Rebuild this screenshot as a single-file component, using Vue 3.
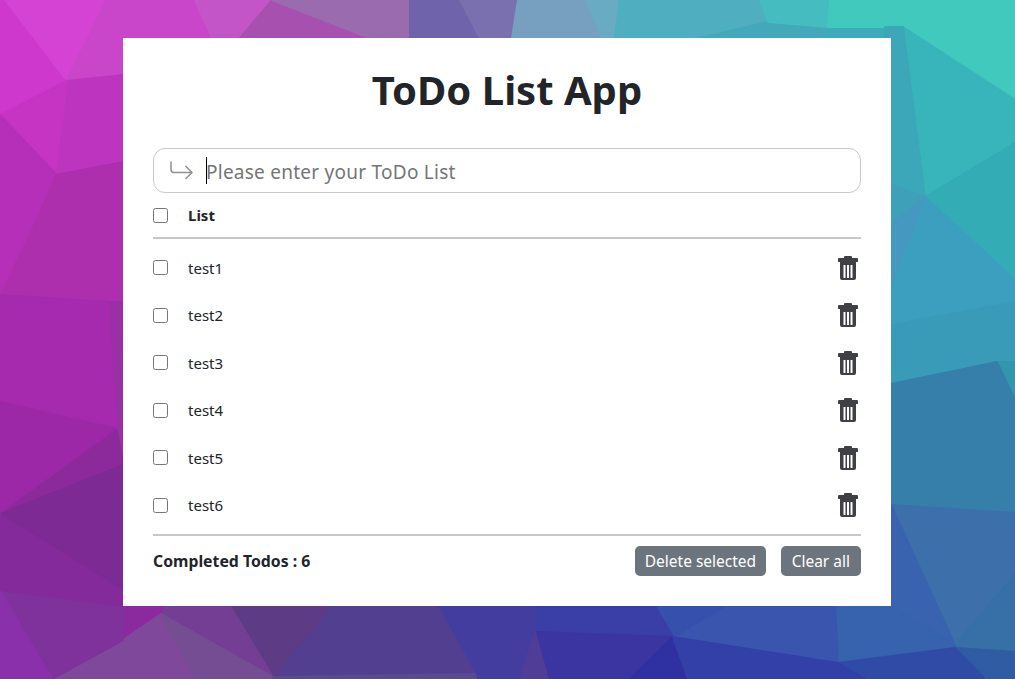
<script setup>
const todos = ['test1', 'test2', 'test3', 'test4', 'test5', 'test6']
const facets = [
  ['0,0 1015,0 1015,679 0,679', '#3a6ab0'],
  ['0,0 5,0 67,81 0,115', '#cf38cc'],
  ['5,0 107,0 67,81', '#d443d4'],
  ['107,0 195,0 212,38 123,75 67,81', '#c945c9'],
  ['195,0 272,0 240,38 212,38', '#c455c9'],
  ['272,0 320,0 410,38 240,38', '#a850b0'],
  ['272,0 410,0 410,38 370,38', '#9b6bb0'],
  ['410,0 460,0 480,38 410,38', '#6f63ab'],
  ['460,0 518,0 512,38 480,38', '#7a70b0'],
  ['518,0 586,0 602,38 512,38', '#779fbf'],
  ['586,0 620,0 615,38 602,38', '#68abc2'],
  ['620,0 760,0 768,22 700,38 615,38', '#4faebf'],
  ['768,22 828,27 826,38 700,38', '#43a8ba'],
  ['760,0 830,0 828,27 768,22', '#45bcc0'],
  ['828,27 903,27 891,38 826,38', '#3dabb9'],
  ['830,0 1015,0 1015,100 903,27 828,27', '#41c9bd'],
  ['903,27 1015,100 1015,143 925,197', '#38b5bb'],
  ['885,27 903,27 925,197 885,185', '#3ba7b8'],
  ['1015,143 925,197 1015,280', '#33acb6'],
  ['925,197 1015,280 1015,302 891,325 891,285', '#3d9fc0'],
  ['891,185 925,197 891,225', '#3fa0ba'],
  ['891,225 925,197 891,285', '#4598bf'],
  ['891,325 1015,302 1015,362 997,362 891,384', '#3a9bb8'],
  ['997,362 1015,362 1015,400', '#3297ac'],
  ['891,384 997,362 1015,400 1015,513 891,505', '#367fab'],
  ['891,505 1015,513 1015,575 955,645', '#3d6fab'],
  ['891,505 955,645 891,606', '#3963af'],
  ['955,645 1015,575 1015,652', '#3670a6'],
  ['891,606 955,645 955,648 838,663 835,606', '#3762ad'],
  ['955,648 1015,652 1015,679 985,679', '#2f5ca3'],
  ['838,663 955,648 985,679 865,679', '#304ba6'],
  ['725,606 835,606 838,663 673,637', '#3a55ae'],
  ['655,606 725,606 673,637', '#3650ae'],
  ['535,606 655,606 673,637 535,632', '#3a3fa8'],
  ['535,632 673,637 630,679 548,679', '#3a35a0'],
  ['673,637 630,679 688,679', '#2f30a2'],
  ['673,637 838,663 865,679 688,679', '#3240a8'],
  ['437,606 535,606 535,632 520,679 476,679 475,674', '#433da0'],
  ['535,632 548,679 520,679', '#503d98'],
  ['330,606 437,606 475,674 273,677', '#523f90'],
  ['230,606 330,606 273,677', '#5d3b85'],
  ['163,606 230,606 273,677 161,614', '#743e95'],
  ['120,606 163,606 161,614 123,640', '#8a2a9e'],
  ['123,640 161,614 195,679 52,679', '#80489a'],
  ['161,614 273,677 273,679 195,679', '#754d92'],
  ['273,677 475,674 476,679 273,679', '#5a4a90'],
  ['0,590 123,606 123,640 52,679', '#7f329b'],
  ['0,590 52,679 0,679', '#8a30aa'],
  ['0,512 123,590 123,606 0,590', '#842a9a'],
  ['0,512 125,462 125,590', '#7e2a94'],
  ['0,512 118,427 125,462', '#8c2a9c'],
  ['0,400 118,427 0,512', '#9c28a8'],
  ['0,293 110,300 118,427 0,400', '#a52aae'],
  ['110,300 125,300 125,462 118,427', '#9a30a5'],
  ['0,293 30,230 55,173 123,160 123,300 110,300', '#ad2fae'],
  ['67,81 123,75 123,160 55,173', '#bd35bf'],
  ['0,115 67,81 55,173', '#c634c4'],
  ['0,115 55,173 30,230 0,293', '#b52fb8']
]
</script>

<template>
  <svg class="backdrop" viewBox="0 0 1015 679" aria-hidden="true">
    <polygon
      v-for="(f, i) in facets"
      :key="i"
      :points="f[0]"
      :fill="f[1]"
      :stroke="f[1]"
      stroke-width="2"
      stroke-linejoin="round"
    />
  </svg>
  <main class="card">
    <h1 class="title">ToDo List App</h1>

    <div class="entry">
      <svg class="entry-icon" viewBox="0 0 23 19" aria-hidden="true">
        <path d="M1 .5v8a3 3 0 0 0 3 3h18M15.500 5l6.500 6.500-6.500 6.500" />
      </svg>
      <input class="entry-input" type="text" placeholder="Please enter your ToDo List" />
      <span class="caret"></span>
    </div>

    <div class="list-head">
      <input class="check" type="checkbox" />
      <strong>List</strong>
    </div>

    <ul class="rows">
      <li v-for="t in todos" :key="t" class="row">
        <input class="check" type="checkbox" />
        <span class="label">{{ t }}</span>
        <svg class="trash" viewBox="0 0 20 24" aria-hidden="true">
          <path fill-rule="evenodd" d="M7 0h6a1 1 0 0 1 1 1v1h5a1 1 0 0 1 1 1v2.500a.500.500 0 0 1-.5.500H18v16a2 2 0 0 1-2 2H4a2 2 0 0 1-2-2V6H.5a.500.500 0 0 1-.5-.500V3a1 1 0 0 1 1-1h5V1a1 1 0 0 1 1-1zM5.500 9v13h2V9zM9 9v13h2V9zm3.500 0v13h2V9z" />
        </svg>
      </li>
    </ul>

    <footer class="foot">
      <strong>Completed Todos : 6</strong>
      <div class="actions">
        <button class="btn btn-delete" type="button">Delete selected</button>
        <button class="btn btn-clear" type="button">Clear all</button>
      </div>
    </footer>
  </main>
</template>

<style>
html, body { margin: 0; overflow: hidden; }
</style>

<style scoped>
.backdrop {
  position: absolute;
  inset: 0;
  width: 1015px;
  height: 679px;
  filter: blur(0.6px);
}
.card {
  position: relative;
  box-sizing: border-box;
  width: 768px;
  height: 568px;
  margin: 38px 0 0 123px;
  padding: 28px 30px 30px;
  background: #fff;
  color: #212529;
  font-family: "Noto Sans", "Noto Sans CJK KR", sans-serif;
  font-size: 15px;
}
.title {
  margin: 0 0 34px;
  font-size: 40px;
  line-height: 48px;
  font-weight: 700;
  text-align: center;
}
.entry {
  position: relative;
  display: flex;
  align-items: center;
  box-sizing: border-box;
  height: 45px;
  padding: 0 12px 0 16px;
  border: 1px solid #c9c9d0;
  border-radius: 12px;
}
.entry-icon {
  flex: none;
  width: 23px;
  height: 19px;
  fill: none;
  stroke: #8f8f8f;
  stroke-width: 1.5;
}
.entry-input {
  flex: 1;
  min-width: 0;
  margin: 2px 0 0 13px;
  padding: 0;
  border: 0;
  outline: 0;
  background: none;
  font: inherit;
  font-size: 19px;
  letter-spacing: 0.25px;
}
.entry-input::placeholder { color: #757575; opacity: 1; }
.caret {
  position: absolute;
  left: 52px;
  top: 8px;
  width: 1px;
  height: 27px;
  background: #000;
}
.list-head {
  display: flex;
  align-items: center;
  height: 44px;
  border-bottom: 2px solid #c8c8c8;
}
.list-head strong { margin-left: 20px; font-size: 15px; }
.check {
  flex: none;
  width: 15px;
  height: 15px;
  margin: 0;
}
.rows {
  margin: 0;
  padding: 5px 0;
  list-style: none;
  border-bottom: 2px solid #c8c8c8;
}
.row {
  display: flex;
  align-items: center;
  height: 47.5px;
}
.label { flex: 1; margin-left: 20px; font-size: 15px; }
.trash {
  flex: none;
  width: 20px;
  height: 24px;
  margin-right: 3px;
  fill: #3f3f46;
}
.foot {
  display: flex;
  align-items: center;
  justify-content: space-between;
  margin-top: 10px;
}
.foot strong { font-size: 15.8px; }
.actions { display: flex; gap: 15px; }
.btn {
  height: 30px;
  border: 0;
  border-radius: 5px;
  background: #6c757d;
  color: #fff;
  font: inherit;
  font-size: 15.5px;
}
.btn-delete { padding: 0 9.5px; }
.btn-clear { padding: 0 11px; }
</style>
